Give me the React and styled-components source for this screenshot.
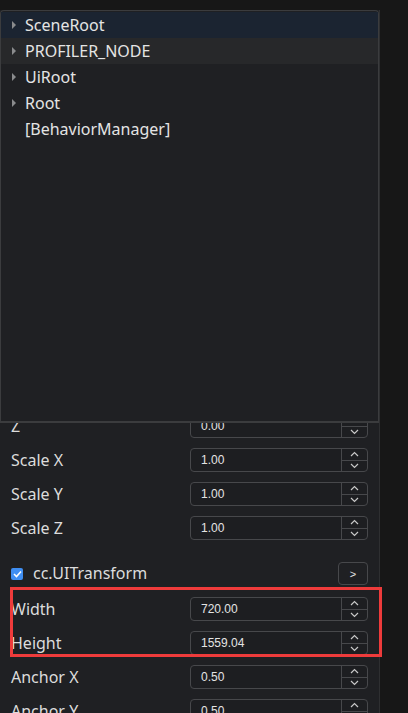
import React from 'react';
import styled, { createGlobalStyle } from 'styled-components';

const GlobalStyle = createGlobalStyle`
	html, body {
		margin: 0;
		padding: 0;
		background: #171717;
		font-family: 'Noto Sans', 'Liberation Sans', sans-serif;
	}
	#root {
		height: 713px;
		overflow: hidden;
	}
`;

const treeNodes = [
	{ name: 'SceneRoot', children: true, state: 'selected' },
	{ name: 'PROFILER_NODE', children: true, state: 'hover' },
	{ name: 'UiRoot', children: true },
	{ name: 'Root', children: true },
	{ name: '[BehaviorManager]', children: false }
];

// rows that sit under the node tree popover
const hiddenRows = [
	['Name', 'Canvas'],
	['Layer', '33554432'],
	['Position X', '360.00'],
	['Position Y', '779.52'],
	['Position Z', '0.00'],
	['Rotation X', '0.00'],
	['Rotation Y', '0.00'],
	['Rotation Z', '0.00'],
	['X', '0.00'],
	['Y', '0.00']
];

const scaleRows = [
	['Z', '0.00'],
	['Scale X', '1.00'],
	['Scale Y', '1.00'],
	['Scale Z', '1.00']
];

const Chevron = ({ up }) => (
	<svg width="9" height="6" viewBox="0 0 9 6">
		<polyline
			points={up ? '1,5 4.5,1.5 8,5' : '1,1 4.5,4.5 8,1'}
			fill="none"
			stroke="#c8c8c8"
			strokeWidth="1.2"
		/>
	</svg>
);

const CheckMark = () => (
	<Check>
		<svg width="9" height="8" viewBox="0 0 9 8">
			<polyline points="1,4 3.5,6.5 8,1.5" fill="none" stroke="#fff" strokeWidth="1.6" />
		</svg>
	</Check>
);

const NumberField = ({ label, value }) => (
	<Row>
		<Label>{label}</Label>
		<Field>
			<Value>{value}</Value>
			<Spinner>
				<SpinBtn>
					<Chevron up />
				</SpinBtn>
				<SpinBtn>
					<Chevron />
				</SpinBtn>
			</Spinner>
		</Field>
	</Row>
);

export default function App() {
	return (
		<>
			<GlobalStyle />
			<Page>
				<Inspector>
					<SectionHeader>
						<CheckMark />
						<SectionTitle>cc.Node</SectionTitle>
						<MoreButton>&gt;</MoreButton>
					</SectionHeader>
					{hiddenRows.map(([l, v]) => (
						<NumberField key={l} label={l} value={v} />
					))}
					{scaleRows.map(([l, v]) => (
						<NumberField key={l} label={l} value={v} />
					))}
					<SectionHeader>
						<CheckMark />
						<SectionTitle>cc.UITransform</SectionTitle>
						<MoreButton>&gt;</MoreButton>
					</SectionHeader>
					<Highlight>
						<NumberField label="Width" value="720.00" />
						<NumberField label="Height" value="1559.04" />
					</Highlight>
					<NumberField label="Anchor X" value="0.50" />
					<NumberField label="Anchor Y" value="0.50" />

					<TreePopover>
						{treeNodes.map(node => (
							<TreeItem key={node.name} state={node.state}>
								<Caret>{node.children && <CaretShape />}</Caret>
								<TreeLabel>{node.name}</TreeLabel>
							</TreeItem>
						))}
					</TreePopover>
				</Inspector>
			</Page>
		</>
	);
}

const Page = styled.div`
	display: flex;
	height: 713px;
	padding-top: 10px;
	box-sizing: border-box;
	background: #171717;
`;

const Inspector = styled.div`
	position: relative;
	width: 379px;
	flex-shrink: 0;
	padding-top: 12px;
	background: #1f2023;
	border-right: 1px solid #2e2f31;
	display: flex;
	flex-direction: column;
`;

const Row = styled.div`
	display: flex;
	align-items: center;
	height: 34px;
	padding: 0 11px 0 11px;
	flex-shrink: 0;
`;

const Label = styled.span`
	flex: 1;
	font-size: 16px;
	line-height: 20px;
	margin-top: -1px;
	color: #dcdcdc;
	white-space: nowrap;
`;

const Field = styled.div`
	display: flex;
	width: 178px;
	height: 24px;
	box-sizing: border-box;
	border: 1px solid #47484b;
	border-radius: 4px;
	background: #1d1e21;
`;

const Value = styled.span`
	flex: 1;
	padding-left: 10px;
	font-family: 'Liberation Sans', Arial, sans-serif;
	font-size: 12px;
	line-height: 22px;
	color: #e4e4e4;
`;

const Spinner = styled.div`
	display: flex;
	flex-direction: column;
	width: 25px;
	border-left: 1px solid #47484b;
`;

const SpinBtn = styled.div`
	flex: 1;
	display: flex;
	align-items: center;
	justify-content: center;
	& + & {
		border-top: 1px solid #47484b;
	}
`;

const SectionHeader = styled.div`
	display: flex;
	align-items: center;
	height: 23px;
	margin: 17px 0 7px;
	padding: 0 11px;
	flex-shrink: 0;
`;

const Check = styled.span`
	display: flex;
	align-items: center;
	justify-content: center;
	width: 12px;
	height: 12px;
	border-radius: 2px;
	background: #3f8ef2;
`;

const SectionTitle = styled.span`
	flex: 1;
	margin-left: 10px;
	font-size: 16px;
	line-height: 20px;
	margin-top: -1px;
	color: #dcdcdc;
`;

const MoreButton = styled.span`
	display: flex;
	align-items: center;
	justify-content: center;
	width: 30px;
	height: 23px;
	box-sizing: border-box;
	border: 1px solid #47484b;
	border-radius: 4px;
	font-family: 'Liberation Sans', Arial, sans-serif;
	font-size: 11px;
	color: #e4e4e4;
`;

const Highlight = styled.div`
	position: relative;
	&::after {
		content: '';
		position: absolute;
		top: -5px;
		left: 10px;
		right: -3px;
		bottom: 3px;
		border: 3px solid #ee3b3b;
		pointer-events: none;
	}
`;

const TreePopover = styled.div`
	position: absolute;
	top: 0;
	left: 0;
	width: 379px;
	height: 413px;
	box-sizing: border-box;
	padding-top: 1px;
	background: #1f2023;
	border: 1px solid #3b3c3e;
	border-bottom-width: 2px;
	border-radius: 4px 4px 0 0;
`;

const TreeItem = styled.div`
	display: flex;
	align-items: center;
	height: 26px;
	background: ${p => (p.state === 'selected' ? '#1b2431' : p.state === 'hover' ? '#27282a' : 'transparent')};
`;

const Caret = styled.span`
	display: flex;
	justify-content: center;
	width: 24px;
	padding-left: 2px;
	box-sizing: border-box;
`;

const CaretShape = styled.span`
	width: 0;
	height: 0;
	border-top: 4px solid transparent;
	border-bottom: 4px solid transparent;
	border-left: 4px solid #8a8b8d;
`;

const TreeLabel = styled.span`
	font-size: 16px;
	color: #e4e4e4;
	white-space: nowrap;
`;
